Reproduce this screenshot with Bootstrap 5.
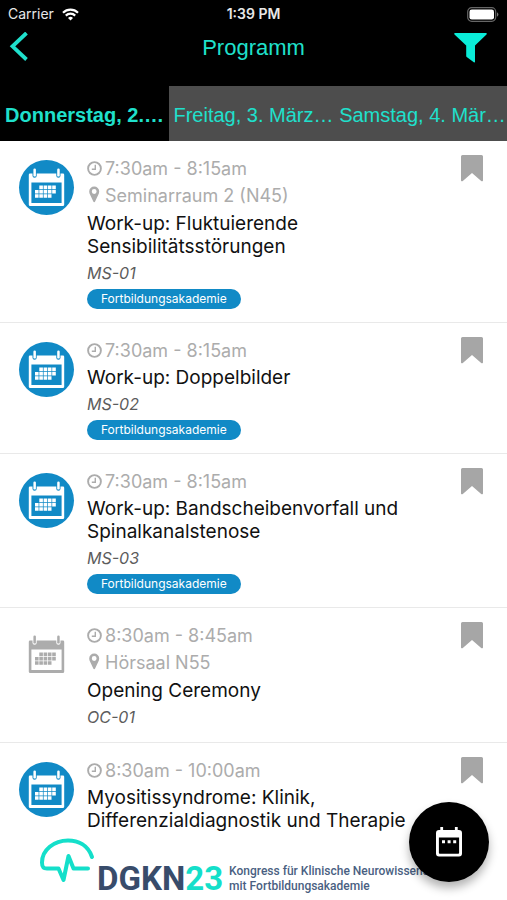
<!DOCTYPE html>
<html lang="de">
<head>
<meta charset="utf-8">
<meta name="viewport" content="width=device-width, initial-scale=1">
<title>Programm</title>
<link href="https://cdn.jsdelivr.net/npm/bootstrap@5.3.0/dist/css/bootstrap.min.css" rel="stylesheet">
<style>
  :root { --mint: #1fe0cc; --brand: #118ac6; --muted: #acacac; }
  body { font-family: Inter, "Liberation Sans", sans-serif; color: #111; }
  .status-bar { height: 28px; font-size: 14px; line-height: 28px; color: #e8e8e8; padding: 0 8px; }
  .title-bar { height: 58px; padding: 0 20px 18px; font-family: "Liberation Sans", sans-serif; }
  .title-bar h1 { font-size: 22px; line-height: 40px; color: var(--mint); }
  .back-btn { margin-left: -12px; }
  .side { flex: 1 1 0; }
  .day-tabs { font-family: "Liberation Sans", sans-serif; font-size: 20px; line-height: 55px; }
  .day-tab { flex: 1 1 0; min-width: 0; padding: 3px 0 0; line-height: 52px; color: var(--mint); background: #4d4d4d; border: 0; text-align: center; white-space: nowrap; overflow: hidden; }
  .day-tab.active { background: #000; font-weight: 700; }
  .sessions { min-height: 0; overflow-y: auto; scrollbar-width: none; }
  .session { padding: 14px 24px 13px 19px; border-bottom: 1px solid #e9e9e9; }
  .session:last-child { border-bottom: 0; }
  .session-icon { width: 55px; height: 55px; margin: 5px 13px 0 0; color: var(--muted); }
  .session-icon.filled { background: var(--brand); color: #fff; }
  .meta { font-size: 18px; line-height: 27px; color: var(--muted); }
  .meta svg { width: 15px; margin-right: 3px; }
  .place { line-height: 28px; }
  .place svg { margin-bottom: 3px; }
  .session h2 { font-size: 19px; line-height: 23px; font-weight: 400; margin: 2px 0 0; color: #111; }
  .code { font-size: 16px; line-height: 24px; margin: 3px 0 0; color: #5c5c5c; font-style: italic; }
  .tag { font-size: 12px; line-height: 20px; height: 20px; margin-top: 4px; padding: 0 14px; background: var(--brand); }
  .mark-btn { width: 22px; height: 27px; color: #a6a6a6; }
  .sponsor { height: 66px; padding: 3px 0 0 39px; color: #4a5f82; font-family: Roboto, sans-serif; }
  .wordmark { font-size: 33px; line-height: 33px; font-weight: 700; margin-top: 25px; color: #384c6b; }
  .wordmark span { color: #14dfca; }
  .claim { font-size: 12px; line-height: 15px; font-weight: 500; margin: 27px 0 0 6px; white-space: nowrap; }
  .fab { position: fixed; right: 18px; bottom: 18px; width: 80px; height: 80px; background: #000; box-shadow: 0 6px 10px rgba(0,0,0,.3); }
</style>
<script src="https://cdn.jsdelivr.net/npm/bootstrap@5.3.0/dist/js/bootstrap.bundle.min.js"></script>
</head>
<body class="vh-100 d-flex flex-column overflow-hidden bg-white">

<svg width="0" height="0" class="position-absolute" aria-hidden="true">
  <symbol id="calendar" viewBox="0 0 55 55">
    <path fill="currentColor" fill-rule="evenodd" d="M11 13.500h2.500v2.200a2.100 2.100 0 0 0 4.200 0v-2.200h19.600v2.200a2.100 2.100 0 0 0 4.200 0v-2.200h2.500a1.200 1.200 0 0 1 1.200 1.200v30a1.400 1.400 0 0 1-1.400 1.400h-32.600a1.400 1.400 0 0 1-1.400-1.400v-30a1.200 1.200 0 0 1 1.200-1.200zM12.400 22.500v20.600h30.200v-20.600z"/>
    <rect x="14.400" y="8.600" width="2.500" height="8" rx="1.200" fill="currentColor"/>
    <rect x="38.200" y="8.600" width="2.500" height="8" rx="1.200" fill="currentColor"/>
    <path stroke="currentColor" stroke-width="3.600" stroke-dasharray="3.600 .7" d="M20.300 27.400h16.500M16 31.700h20.800M16 36h16.500" fill="none"/>
  </symbol>
  <symbol id="clock" viewBox="0 0 15 15">
    <circle cx="7.500" cy="7.500" r="6.400" fill="none" stroke="currentColor" stroke-width="1.900"/>
    <path d="M8.300 3.800v4.400H4.800" fill="none" stroke="currentColor" stroke-width="1.400"/>
  </symbol>
  <symbol id="pin" viewBox="0 0 15 17">
    <path fill="currentColor" fill-rule="evenodd" d="M7.200.5a5 5 0 0 1 5 5c0 1.300-.4 2.200-.8 3l-3.300 7.100c-.4.800-1.400.8-1.800 0L3 8.500c-.4-.8-.8-1.700-.8-3a5 5 0 0 1 5-5zm0 2.600a2.400 2.400 0 1 0 0 4.800 2.400 2.400 0 0 0 0-4.800z"/>
  </symbol>
  <symbol id="bookmark" viewBox="0 0 22 27">
    <path fill="currentColor" d="M1.500 0h19A1.500 1.500 0 0 1 22 1.500v23.700c0 1.200-1 1.500-1.800.8L11 18l-9.200 8c-.8.700-1.800.4-1.800-.8V1.500A1.500 1.500 0 0 1 1.500 0z"/>
  </symbol>
</svg>

<header class="bg-black flex-shrink-0">
  <div class="status-bar d-flex align-items-center">
    <div class="side d-flex align-items-center gap-2">
      <span>Carrier</span>
      <svg width="17" height="13" viewBox="0 0 17 13" fill="none" stroke="#fff" stroke-width="2.200" aria-hidden="true"><path d="M1 4.700a10.800 10.800 0 0 1 15 0M3.800 7.600a6.700 6.700 0 0 1 9.400 0"/><path d="M8.500 12.500L6 9.900a3.600 3.600 0 0 1 5 0z" fill="#fff" stroke="none"/></svg>
    </div>
    <span class="fw-semibold">1:39 PM</span>
    <div class="side d-flex justify-content-end">
      <svg width="32" height="15" viewBox="0 0 32 15" aria-hidden="true"><rect x=".7" y=".7" width="28" height="13.600" rx="4" fill="none" stroke="#666" stroke-width="1.200"/><rect x="2.500" y="2.500" width="24.500" height="10" rx="2.300" fill="#fff"/><path d="M30 5.200a2.600 2.600 0 0 1 0 4.600z" fill="#777"/></svg>
    </div>
  </div>
  <div class="title-bar d-flex align-items-center">
    <div class="side">
      <button class="back-btn btn p-0 border-0 d-block" type="button" aria-label="Zurück"><svg class="d-block" width="22" height="32" viewBox="0 0 22 32"><path d="M18.500 1L4.500 14.300l14 13.200" fill="none" stroke="#1fe0cc" stroke-width="3.800"/></svg></button>
    </div>
    <h1 class="m-0 fw-normal">Programm</h1>
    <div class="side d-flex justify-content-end">
      <button class="btn p-0 border-0 d-block" type="button" aria-label="Filter"><svg class="d-block" width="33" height="30" viewBox="0 0 33 30"><path d="M1 0h31c.8 0 1.100.9.500 1.500L21 12.500v16.200c0 .6-.6.900-1.200.5L12.700 24c-.4-.3-.5-.6-.5-1V12.500L.5 1.500C-.1.900.2 0 1 0z" fill="#0aecd8"/></svg></button>
    </div>
  </div>
  <nav class="day-tabs d-flex" role="tablist" aria-label="Tage">
    <button class="day-tab active" type="button" role="tab" aria-selected="true">Donnerstag, 2.…</button>
    <button class="day-tab" type="button" role="tab" aria-selected="false">Freitag, 3. März…</button>
    <button class="day-tab" type="button" role="tab" aria-selected="false">Samstag, 4. Mär…</button>
  </nav>
</header>

<main class="sessions flex-fill">
  <article class="session d-flex align-items-start">
    <div class="session-icon filled rounded-circle flex-shrink-0"><svg class="d-block" width="55" height="55"><use href="#calendar"/></svg></div>
    <div class="flex-fill pe-5">
      <div class="meta d-flex align-items-center"><svg height="15"><use href="#clock"/></svg>7:30am - 8:15am</div>
      <div class="meta place d-flex align-items-center"><svg height="17"><use href="#pin"/></svg>Seminarraum 2 (N45)</div>
      <h2>Work-up: Fluktuierende Sensibilitätsstörungen</h2>
      <p class="code">MS-01</p>
      <span class="tag badge rounded-pill fw-normal d-table">Fortbildungsakademie</span>
    </div>
    <button class="mark-btn btn p-0 border-0 flex-shrink-0" type="button" aria-label="Merken"><svg class="d-block" width="22" height="27"><use href="#bookmark"/></svg></button>
  </article>

  <article class="session d-flex align-items-start">
    <div class="session-icon filled rounded-circle flex-shrink-0"><svg class="d-block" width="55" height="55"><use href="#calendar"/></svg></div>
    <div class="flex-fill pe-5">
      <div class="meta d-flex align-items-center"><svg height="15"><use href="#clock"/></svg>7:30am - 8:15am</div>
      <h2>Work-up: Doppelbilder</h2>
      <p class="code">MS-02</p>
      <span class="tag badge rounded-pill fw-normal d-table">Fortbildungsakademie</span>
    </div>
    <button class="mark-btn btn p-0 border-0 flex-shrink-0" type="button" aria-label="Merken"><svg class="d-block" width="22" height="27"><use href="#bookmark"/></svg></button>
  </article>

  <article class="session d-flex align-items-start">
    <div class="session-icon filled rounded-circle flex-shrink-0"><svg class="d-block" width="55" height="55"><use href="#calendar"/></svg></div>
    <div class="flex-fill pe-5">
      <div class="meta d-flex align-items-center"><svg height="15"><use href="#clock"/></svg>7:30am - 8:15am</div>
      <h2>Work-up: Bandscheibenvorfall und Spinalkanalstenose</h2>
      <p class="code">MS-03</p>
      <span class="tag badge rounded-pill fw-normal d-table">Fortbildungsakademie</span>
    </div>
    <button class="mark-btn btn p-0 border-0 flex-shrink-0" type="button" aria-label="Merken"><svg class="d-block" width="22" height="27"><use href="#bookmark"/></svg></button>
  </article>

  <article class="session d-flex align-items-start">
    <div class="session-icon flex-shrink-0"><svg class="d-block" width="55" height="55"><use href="#calendar"/></svg></div>
    <div class="flex-fill pe-5">
      <div class="meta d-flex align-items-center"><svg height="15"><use href="#clock"/></svg>8:30am - 8:45am</div>
      <div class="meta place d-flex align-items-center"><svg height="17"><use href="#pin"/></svg>Hörsaal N55</div>
      <h2>Opening Ceremony</h2>
      <p class="code">OC-01</p>
    </div>
    <button class="mark-btn btn p-0 border-0 flex-shrink-0" type="button" aria-label="Merken"><svg class="d-block" width="22" height="27"><use href="#bookmark"/></svg></button>
  </article>

  <article class="session d-flex align-items-start pb-0">
    <div class="session-icon filled rounded-circle flex-shrink-0"><svg class="d-block" width="55" height="55"><use href="#calendar"/></svg></div>
    <div class="flex-fill pe-5">
      <div class="meta d-flex align-items-center"><svg height="15"><use href="#clock"/></svg>8:30am - 10:00am</div>
      <h2>Myositissyndrome: Klinik, Differenzialdiagnostik und Therapie</h2>
    </div>
    <button class="mark-btn btn p-0 border-0 flex-shrink-0" type="button" aria-label="Merken"><svg class="d-block" width="22" height="27"><use href="#bookmark"/></svg></button>
  </article>
</main>

<footer class="sponsor d-flex align-items-start flex-shrink-0 bg-white">
  <svg class="flex-shrink-0" width="58" height="48" viewBox="0 0 58 48" aria-hidden="true"><path d="M53 20C49 8 39 3.500 29 3.500C15 3.500 3 13 3 25.500C3 30 4.500 31.500 8 31.500H19.500L24.500 43L29.500 19L34.500 31.500H49" fill="none" stroke="#14dfca" stroke-width="4" stroke-linecap="round" stroke-linejoin="round"/></svg>
  <div class="wordmark">DGKN<span>23</span></div>
  <div class="claim">Kongress für Klinische Neurowissenschaften<br>mit Fortbildungsakademie</div>
</footer>

<button class="fab btn rounded-circle border-0 p-0 d-flex align-items-center justify-content-center" type="button" aria-label="Mein Programm">
  <svg width="26" height="30" viewBox="0 0 26 30"><path fill="#fff" fill-rule="evenodd" d="M4.300 0h2.800v3h11.800V0h2.800v3H23a3 3 0 0 1 3 3v20.500a3 3 0 0 1-3 3H3a3 3 0 0 1-3-3V6a3 3 0 0 1 3-3h1.300zM2.900 10.500v15.300c0 .6.300.9.900.9h18.400c.6 0 .9-.3.900-.9V10.500z"/><path fill="#fff" d="M6 13.300h3v3H6zM11.600 13.300h3v3h-3zM17.200 13.300h3v3h-3z"/></svg>
</button>
</body>
</html>
